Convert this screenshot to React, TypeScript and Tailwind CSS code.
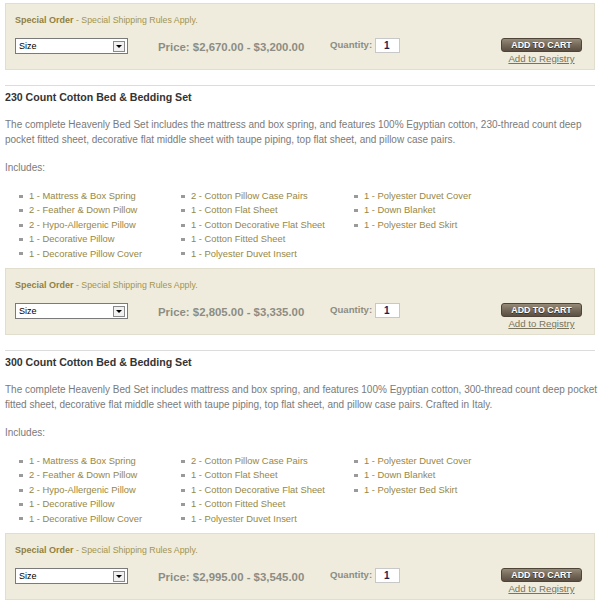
const sets = [
  {
    title: "230 Count Cotton Bed & Bedding Set",
    desc: [
      "The complete Heavenly Bed Set includes the mattress and box spring, and features 100% Egyptian cotton, 230-thread count deep",
      "pocket fitted sheet, decorative flat middle sheet with taupe piping, top flat sheet, and pillow case pairs.",
    ],
    price: "Price: $2,805.00 - $3,335.00",
  },
  {
    title: "300 Count Cotton Bed & Bedding Set",
    desc: [
      "The complete Heavenly Bed Set includes mattress and box spring, and features 100% Egyptian cotton, 300-thread count deep pocket",
      "fitted sheet, decorative flat middle sheet with taupe piping, top flat sheet, and pillow case pairs. Crafted in Italy.",
    ],
    price: "Price: $2,995.00 - $3,545.00",
  },
];

const includes = [
  ["1 - Mattress & Box Spring", "2 - Feather & Down Pillow", "2 - Hypo-Allergenic Pillow", "1 - Decorative Pillow", "1 - Decorative Pillow Cover"],
  ["2 - Cotton Pillow Case Pairs", "1 - Cotton Flat Sheet", "1 - Cotton Decorative Flat Sheet", "1 - Cotton Fitted Sheet", "1 - Polyester Duvet Insert"],
  ["1 - Polyester Duvet Cover", "1 - Down Blanket", "1 - Polyester Bed Skirt"],
];

const colWidths = ["w-[162px]", "w-[173px]", "w-[160px]"];

function OrderBox({ price, className = "" }: { price: string; className?: string }) {
  return (
    <div className={`border border-[#e2dece] bg-[#efecdd] pt-[7px] pb-[4px] pl-[9px] pr-[12px] ${className}`}>
      <p className="leading-[14px]">
        <span className="text-[9px] font-bold text-[#8f8044]">Special Order</span>
        <span className="text-[8.8px] text-[#a3944f]"> - Special Shipping Rules Apply.</span>
      </p>
      <div className="mt-[11px] flex items-start">
        <div className="w-[143px] shrink-0">
          <div className="flex h-[16px] w-[113px] items-center justify-between border border-[#7a7a7a] bg-white pl-[3px] pr-[2px]">
            <span className="text-[9px] leading-none text-black">Size</span>
            <span className="flex h-[11px] w-[12px] items-center justify-center border border-[#8a8a8a] bg-[#f1f1f1]">
              <span className="h-0 w-0 border-x-[3px] border-t-[3px] border-x-transparent border-t-black" />
            </span>
          </div>
        </div>
        <div className="w-[172px] shrink-0 pt-[1px] text-[11.4px] font-bold leading-[16px] text-[#8d8c84]">{price}</div>
        <div className="flex flex-1 items-center">
          <span className="text-[9.6px] font-bold text-[#8d8c84]">Quantity:</span>
          <span className="ml-[3px] flex h-[15px] w-[25px] items-center border border-[#c8c8c8] bg-white pl-[8px] text-[10px] font-bold text-[#1a2250]">1</span>
        </div>
        <div className="flex w-[81px] flex-col items-center">
          <button className="h-[14px] w-[81px] rounded-[3px] border border-[#4e4438] bg-gradient-to-b from-[#968a78] via-[#75695a] to-[#5a4f42] text-[8.8px] font-bold leading-none text-white [text-shadow:0_1px_0_#3a3026]">
            ADD TO CART
          </button>
          <a className="mt-[1px] text-[9.7px] leading-[12px] text-[#7a745c] underline">Add to Registry</a>
        </div>
      </div>
    </div>
  );
}

function BedSet({ title, desc, price }: { title: string; desc: string[]; price: string }) {
  return (
    <section>
      <div className="mt-[15px] h-px bg-[#dcdcdc]" />
      <h2 className="mt-[3px] text-[10.6px] font-bold leading-[16px] text-[#333]">{title}</h2>
      <p className="mt-[12px] whitespace-nowrap text-[10px] leading-[15px] text-[#7a7a7a]">
        {desc[0]}
        <br />
        {desc[1]}
      </p>
      <p className="mt-[13px] text-[10px] leading-[15px] text-[#7a7a7a]">Includes:</p>
      <div className="mt-[14px] flex pl-[14px]">
        {includes.map((col, i) => (
          <ul key={i} className={colWidths[i]}>
            {col.map((item) => (
              <li key={item} className="flex items-center text-[9.4px] leading-[14.4px] text-[#968746]">
                <span className="mr-[6px] h-[3px] w-[4px] bg-[#9a9a9a]" />
                {item}
              </li>
            ))}
          </ul>
        ))}
      </div>
      <OrderBox price={price} className="mt-[7px]" />
    </section>
  );
}

export default function App() {
  return (
    <div className="h-[611px] w-[600px] overflow-hidden bg-white pl-[5px] pr-[5px] pt-[3px] font-['Liberation_Sans',Arial,sans-serif]">
      <OrderBox price="Price: $2,670.00 - $3,200.00" />
      {sets.map((s) => (
        <BedSet key={s.title} {...s} />
      ))}
    </div>
  );
}
